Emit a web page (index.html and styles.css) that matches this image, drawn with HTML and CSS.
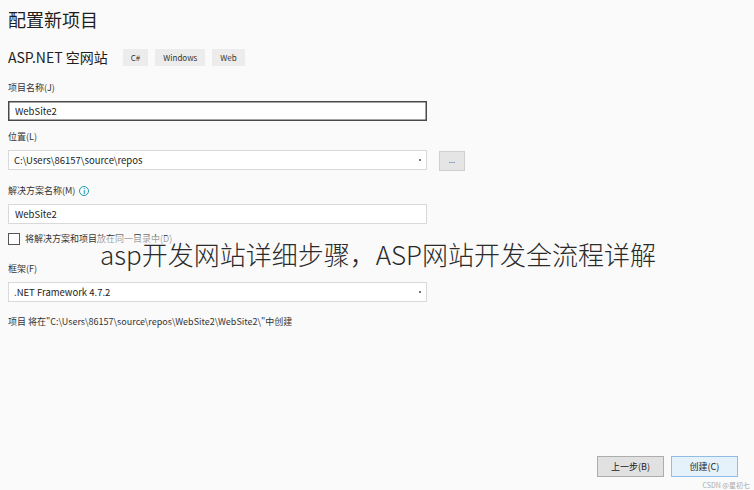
FILE: index.html
```html
<!DOCTYPE html>
<html lang="zh-CN">
<head>
<meta charset="UTF-8">
<title>配置新项目</title>
<link rel="stylesheet" href="styles.css">
</head>
<body>
  <div class="page">
    <h1 class="title">配置新项目</h1>

    <div class="template">
      <span class="template-name">ASP.NET 空网站</span>
      <span class="tag">C#</span>
      <span class="tag">Windows</span>
      <span class="tag">Web</span>
    </div>

    <!-- form fields -->
    <div class="field first">
      <label class="label">项目名称(J)</label>
      <div class="input focused">WebSite2</div>
    </div>

    <div class="field">
      <label class="label">位置(L)</label>
      <div class="row">
        <div class="input select">C:\Users\86157\source\repos<span class="arrow"></span></div>
        <div class="browse">...</div>
      </div>
    </div>

    <div class="field solution">
      <label class="label">解决方案名称(M) <span class="info">i</span></label>
      <div class="input">WebSite2</div>
    </div>

    <div class="check-row">
      <span class="checkbox"></span>
      <span class="check-label">将解决方案和项目放在同一目录中(D)</span>
    </div>

    <div class="field framework">
      <label class="label">框架(F)</label>
      <div class="input select">.NET Framework 4.7.2<span class="arrow"></span></div>
    </div>

    <p class="note">项目 将在"C:\Users\86157\source\repos\WebSite2\WebSite2\"中创建</p>

    <div class="footer">
      <button class="btn">上一步(B)</button>
      <button class="btn primary">创建(C)</button>
    </div>
  </div>

  <!-- caption pasted over the screenshot -->
  <div class="caption">asp开发网站详细步骤，ASP网站开发全流程详解</div>
  <div class="watermark">CSDN @星初七</div>
</body>
</html>
```

FILE: styles.css
```css
body {
  margin: 0;
  background-color: #fafafa;
  font-family: "Noto Sans CJK SC", "Liberation Sans", sans-serif;
  color: #1e1e1e;
  position: relative;
  height: 490px;
  overflow: hidden;
}

.page {
  display: flex;
  flex-direction: column;
  height: 490px;
  padding: 0 0 0 8px;
  box-sizing: border-box;
}

.title {
  margin: 6px 0 0;
  font-size: 18px;
  font-weight: 400;
  line-height: 26px;
}

.template {
  display: flex;
  align-items: center;
  margin-top: 16px;
  height: 18px;
}

.template-name {
  font-size: 14px;
  margin-right: 15px;
}

.tag {
  background-color: #ececec;
  font-size: 8px;
  padding: 0 8px;
  line-height: 17px;
  margin-right: 7px;
  color: #333;
}

.field {
  margin-top: 10px;
}

.field.first {
  margin-top: 16px;
}

.field.solution {
  margin-top: 14px;
}

.field.framework {
  margin-top: 18px;
}

.label {
  display: flex;
  align-items: center;
  font-size: 9px;
  line-height: 12px;
  color: #333;
  height: 12px;
}

.info {
  display: inline-block;
  width: 8px;
  height: 8px;
  border: 1px solid #1b9aaa;
  border-radius: 50%;
  color: #1b9aaa;
  font-size: 7px;
  line-height: 8px;
  text-align: center;
  font-weight: 700;
  margin-left: 4px;
}

.input {
  position: relative;
  margin-top: 7px;
  width: 419px;
  height: 20px;
  box-sizing: border-box;
  border: 1px solid #d9d9d9;
  background-color: #fff;
  font-size: 9.5px;
  line-height: 18px;
  padding-left: 6px;
  color: #222;
}

.input.focused {
  border: 1px solid #4a4a4a;
  box-shadow: inset 0 0 0 0.5px #4a4a4a;
}

.select {
  padding-left: 5px;
}

.arrow {
  position: absolute;
  right: 5px;
  top: 8px;
  width: 2px;
  height: 2px;
  background-color: #777;
}

.row {
  display: flex;
  align-items: flex-start;
}

.browse {
  margin: 8px 0 0 12px;
  width: 26px;
  height: 20px;
  box-sizing: border-box;
  background-color: #e5e5e5;
  border: 1px solid #cfcfcf;
  font-size: 8px;
  line-height: 16px;
  text-align: center;
  color: #555;
}

.check-row {
  display: flex;
  align-items: center;
  margin-top: 8px;
  height: 13px;
}

.checkbox {
  width: 12px;
  height: 12px;
  box-sizing: border-box;
  border: 1px solid #555;
  background-color: #fff;
}

.check-label {
  font-size: 9px;
  margin-left: 5px;
  color: #333;
}

.note {
  margin: 14px 0 0;
  font-size: 9px;
  line-height: 12px;
  color: #333;
}

.footer {
  margin-top: auto;
  margin-bottom: 13px;
  display: flex;
  justify-content: flex-end;
  gap: 7px;
  padding-right: 16px;
}

.btn {
  width: 67px;
  height: 21px;
  font-family: inherit;
  font-size: 9px;
  color: #222;
  background-color: #e1e1e1;
  border: 1px solid #adadad;
  padding: 0;
}

.btn.primary {
  background-color: #e5f1fb;
  border-color: #8fbde6;
}

.caption {
  position: absolute;
  left: 98px;
  top: 236px;
  padding: 0 2px;
  font-size: 26px;
  font-weight: 300;
  line-height: 36px;
  color: #2b2b2b;
  background-color: rgba(250, 250, 250, 0.55);
}

.watermark {
  position: absolute;
  right: 4px;
  bottom: 0;
  font-size: 7px;
  line-height: 9px;
  color: #aaa;
}
```
